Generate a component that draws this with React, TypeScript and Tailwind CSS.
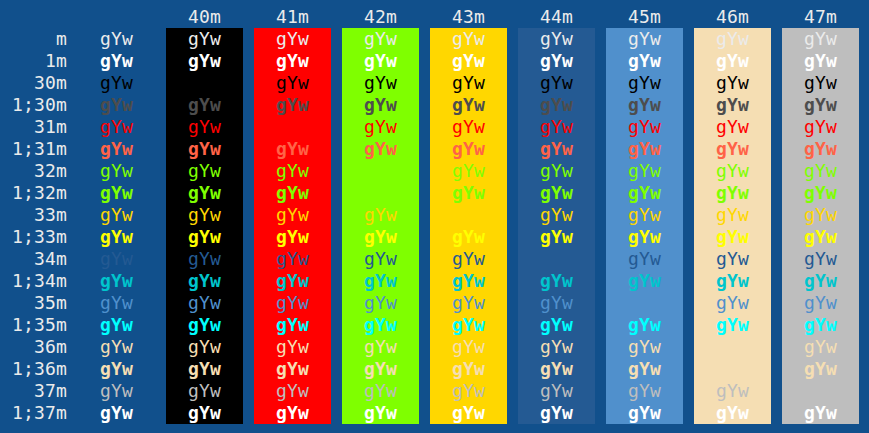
const rows: { label: string; color: string; bold?: boolean }[] = [
  { label: "m", color: "text-[#ebebeb]" },
  { label: "1m", color: "text-[#ffffff]", bold: true },
  { label: "30m", color: "text-[#000000]" },
  { label: "1;30m", color: "text-[#4d4d4d]", bold: true },
  { label: "31m", color: "text-[#ff0000]" },
  { label: "1;31m", color: "text-[#ff6347]", bold: true },
  { label: "32m", color: "text-[#7fff00]" },
  { label: "1;32m", color: "text-[#7fff00]", bold: true },
  { label: "33m", color: "text-[#ffd700]" },
  { label: "1;33m", color: "text-[#ffff00]", bold: true },
  { label: "34m", color: "text-[#245a93]" },
  { label: "1;34m", color: "text-[#00c5cd]", bold: true },
  { label: "35m", color: "text-[#5090cc]" },
  { label: "1;35m", color: "text-[#00ffff]", bold: true },
  { label: "36m", color: "text-[#f5deb3]" },
  { label: "1;36m", color: "text-[#f5deb3]", bold: true },
  { label: "37m", color: "text-[#bebebe]" },
  { label: "1;37m", color: "text-[#ffffff]", bold: true },
];

const backgrounds = [
  { label: "40m", bg: "bg-[#000000]" },
  { label: "41m", bg: "bg-[#ff0000]" },
  { label: "42m", bg: "bg-[#7fff00]" },
  { label: "43m", bg: "bg-[#ffd700]" },
  { label: "44m", bg: "bg-[#245a93]" },
  { label: "45m", bg: "bg-[#5090cc]" },
  { label: "46m", bg: "bg-[#f5deb3]" },
  { label: "47m", bg: "bg-[#bebebe]" },
];

function Sample({ color, bold }: { color: string; bold?: boolean }) {
  return <div className={`h-[22px] ${color} ${bold ? "font-bold" : "font-normal"}`}>gYw</div>;
}

export default function App() {
  return (
    <div
      className="flex h-[433px] w-[869px] overflow-hidden bg-[#11508c] pl-[1px] pt-[6px] text-[18px] leading-[22px] tracking-[0.16px] text-[#ebebeb]"
      style={{ fontFamily: '"DejaVu Sans Mono", "Liberation Mono", monospace' }}
    >
      {/* row labels */}
      <div className="w-[66px] shrink-0 text-right">
        <div className="h-[22px]" />
        {rows.map((r) => (
          <div key={r.label} className="h-[22px]">
            {r.label}
          </div>
        ))}
      </div>

      {/* default background */}
      <div className="w-[99px] shrink-0 pl-[33px]">
        <div className="h-[22px]" />
        {rows.map((r) => (
          <Sample key={r.label} color={r.color} bold={r.bold} />
        ))}
      </div>

      {/* colored backgrounds */}
      <div className="flex gap-[11px]">
        {backgrounds.map((b) => (
          <div key={b.label} className="w-[77px] shrink-0">
            <div className="h-[22px] pl-[22px]">{b.label}</div>
            <div className={`${b.bg} pl-[22px]`}>
              {rows.map((r) => (
                <Sample key={r.label} color={r.color} bold={r.bold} />
              ))}
            </div>
          </div>
        ))}
      </div>
    </div>
  );
}
